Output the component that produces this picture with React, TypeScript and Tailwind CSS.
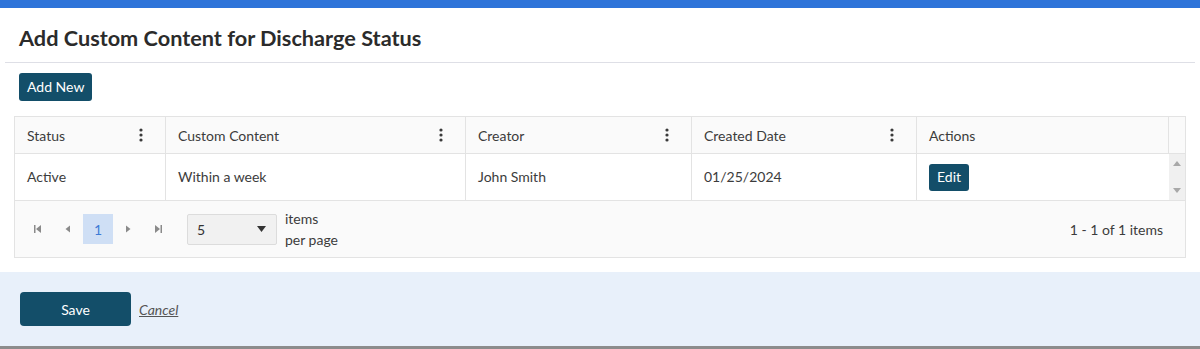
import React from "react";

const columns = [
  { label: "Status", width: "w-[151px]", menu: true },
  { label: "Custom Content", width: "w-[300px]", menu: true },
  { label: "Creator", width: "w-[226px]", menu: true },
  { label: "Created Date", width: "w-[225px]", menu: true },
  { label: "Actions", width: "w-[252px]", menu: false },
];

function Kebab() {
  return (
    <svg width="4" height="14" viewBox="0 0 4 14" className="shrink-0">
      <circle cx="2" cy="2" r="1.6" fill="#3a3a3a" />
      <circle cx="2" cy="7" r="1.6" fill="#3a3a3a" />
      <circle cx="2" cy="12" r="1.6" fill="#3a3a3a" />
    </svg>
  );
}

function PagerIcon({ kind }: { kind: "first" | "prev" | "next" | "last" }) {
  return (
    <svg width="10" height="10" viewBox="0 0 10 10">
      {kind === "first" && (
        <>
          <rect x="1" y="1" width="1.5" height="8" fill="#8a8a8a" />
          <path d="M8 1 L3 5 L8 9 Z" fill="#8a8a8a" />
        </>
      )}
      {kind === "prev" && <path d="M7 1.5 L2.5 5 L7 8.5 Z" fill="#8a8a8a" />}
      {kind === "next" && <path d="M3 1.5 L7.5 5 L3 8.5 Z" fill="#8a8a8a" />}
      {kind === "last" && (
        <>
          <path d="M2 1 L7 5 L2 9 Z" fill="#8a8a8a" />
          <rect x="7.5" y="1" width="1.5" height="8" fill="#8a8a8a" />
        </>
      )}
    </svg>
  );
}

export default function App() {
  return (
    <div className="w-[1200px] h-[349px] bg-white font-['Lato','Noto_Sans',sans-serif] text-[14px] text-[#3c3c3c] flex flex-col overflow-hidden">
      {/* top accent */}
      <div className="h-[8px] bg-[#2e74d9] shrink-0" />

      <div className="flex flex-col flex-1">
        <div className="pt-[16px] pb-[10px] px-[19px]">
          <h1 className="text-[21.7px] leading-[28px] font-bold text-[#2b2b2b]">
            Add Custom Content for Discharge Status
          </h1>
        </div>
        <div className="mx-[5px] h-px bg-[#dedfe6]" />

        <div className="px-[19px] pt-[10px]">
          <button className="h-[28px] px-[8px] rounded-[3px] bg-[#134e69] text-white text-[14px] leading-none">
            Add New
          </button>
        </div>

        {/* grid */}
        <div className="mx-[14px] mt-[15px] w-[1172px] border border-[#e3e3e3]">
          <div className="flex h-[37px] bg-[#fafafa] border-b border-[#e3e3e3]">
            {columns.map((c) => (
              <div
                key={c.label}
                className={`${c.width} flex items-center justify-between pl-[12px] pr-[22px] border-r border-[#e3e3e3]`}
              >
                <span>{c.label}</span>
                {c.menu && <Kebab />}
              </div>
            ))}
            <div className="w-[16px]" />
          </div>

          <div className="flex h-[47px] bg-white border-b border-[#e3e3e3]">
            <div className="w-[151px] flex items-center pl-[12px] pb-[2px] border-r border-[#e3e3e3]">Active</div>
            <div className="w-[300px] flex items-center pl-[12px] pb-[2px] border-r border-[#e3e3e3]">Within a week</div>
            <div className="w-[226px] flex items-center pl-[12px] pb-[2px] border-r border-[#e3e3e3]">John Smith</div>
            <div className="w-[225px] flex items-center pl-[12px] pb-[2px] border-r border-[#e3e3e3]">01/25/2024</div>
            <div className="w-[252px] flex items-center pl-[12px]">
              <button className="h-[27px] px-[8px] rounded-[3px] bg-[#134e69] text-white text-[14px] leading-none">
                Edit
              </button>
            </div>
            <div className="w-[16px] bg-[#f0f0f0] flex flex-col items-center justify-between py-[7px]">
              <svg width="8" height="5" viewBox="0 0 8 5">
                <path d="M0 5 L4 0 L8 5 Z" fill="#a8a8a8" />
              </svg>
              <svg width="8" height="5" viewBox="0 0 8 5">
                <path d="M0 0 L4 5 L8 0 Z" fill="#a8a8a8" />
              </svg>
            </div>
          </div>

          <div className="flex items-center h-[56px] bg-[#fafafa] pl-[8px] pr-[22px]">
            <div className="flex items-center">
              <div className="w-[30px] h-[30px] flex items-center justify-center"><PagerIcon kind="first" /></div>
              <div className="w-[30px] h-[30px] flex items-center justify-center"><PagerIcon kind="prev" /></div>
              <div className="w-[30px] h-[30px] flex items-center justify-center bg-[#cfdff5] text-[#3e7bd5]">1</div>
              <div className="w-[30px] h-[30px] flex items-center justify-center"><PagerIcon kind="next" /></div>
              <div className="w-[30px] h-[30px] flex items-center justify-center"><PagerIcon kind="last" /></div>
            </div>
            <div className="ml-[14px] w-[90px] h-[31px] bg-[#f1f1f1] border border-[#dcdcdc] rounded-[2px] flex items-center justify-between pl-[9px] pr-[10px]">
              <span className="text-[#333]">5</span>
              <svg width="9" height="6" viewBox="0 0 9 6">
                <path d="M0 0 L9 0 L4.5 6 Z" fill="#333" />
              </svg>
            </div>
            <div className="ml-[8px] leading-[21px] flex flex-col">
              <span>items</span>
              <span>per page</span>
            </div>
            <div className="ml-auto">1 - 1 of 1 items</div>
          </div>
        </div>
      </div>

      {/* footer */}
      <div className="h-[77px] shrink-0 bg-[#e8f0fa] border-b-[3px] border-[#8c8c8c] flex items-center px-[20px] gap-[8px]">
        <button className="w-[111px] h-[34px] rounded-[4px] bg-[#134e69] text-white text-[14px]">
          Save
        </button>
        <a className="italic underline text-[#555]">Cancel</a>
      </div>
    </div>
  );
}
